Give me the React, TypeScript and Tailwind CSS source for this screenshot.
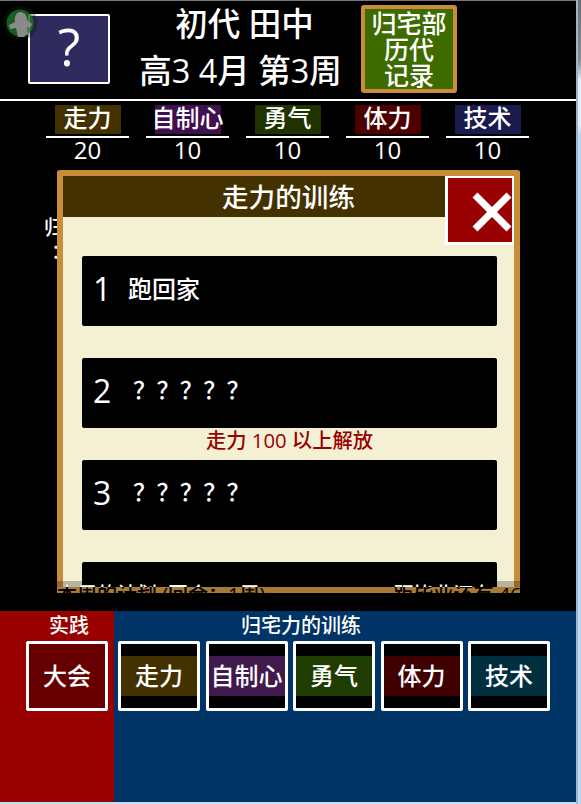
const font = "font-['Open_Sans','Noto_Sans_CJK_SC',sans-serif] font-medium";

const stats = [
  { label: "走力", value: 20, bg: "bg-[#433200]" },
  { label: "自制心", value: 10, bg: "bg-[#3f0f4f]" },
  { label: "勇气", value: 10, bg: "bg-[#1f3300]" },
  { label: "体力", value: 10, bg: "bg-[#4d0000]" },
  { label: "技术", value: 10, bg: "bg-[#191a4d]" },
];

const trainings = [
  { label: "走力", bg: "bg-[#433200]" },
  { label: "自制心", bg: "bg-[#401a4d]" },
  { label: "勇气", bg: "bg-[#1f3d00]" },
  { label: "体力", bg: "bg-[#400000]" },
  { label: "技术", bg: "bg-[#00303f]" },
];

const courses = [
  { no: 1, name: "跑回家", note: "" },
  { no: 2, name: "？？？？？", note: "走力 100 以上解放" },
  { no: 3, name: "？？？？？", note: "" },
  { no: 4, name: "", note: "" },
];

function Header() {
  return (
    <header className="flex h-[98px] pl-[28px]">
      <div className="mt-[13px] flex h-[70px] w-[82px] items-center justify-center rounded-[2px] border-2 border-white bg-[#2f2b5f] pb-[7px] text-[52px] leading-none text-white">
        ?
      </div>
      <div className="flex w-[251px] flex-col items-center pt-[2px] text-[32.5px] leading-[42px] text-white">
        <div className="ml-[18px]">初代 田中</div>
        <div className="ml-[10px] mt-[5px] whitespace-nowrap">高3 4月 第3周</div>
      </div>
      <button className="mt-[4px] flex h-[88px] w-[96px] flex-col items-center justify-center rounded-[3px] border-4 border-[#c98c38] bg-[#3d6b00] text-[25px] leading-[26px] text-white">
        <span>归宅部</span>
        <span>历代</span>
        <span>记录</span>
      </button>
    </header>
  );
}

function StatRow() {
  return (
    <div className="flex gap-[17px] pl-[46px] pt-[4px]">
      {stats.map((s) => (
        <div key={s.label} className="flex w-[83px] flex-col items-center text-white">
          <div className={`flex h-[29px] w-[66px] items-center justify-center whitespace-nowrap pb-[4px] text-[24px] leading-none ${s.bg}`}>
            {s.label}
          </div>
          <div className="mt-[2px] h-[2px] w-full bg-white" />
          <div className="pb-[4px] text-[24px] leading-[24px]">{s.value}</div>
        </div>
      ))}
    </div>
  );
}

function TrainingModal() {
  return (
    <div className="absolute left-[57px] top-[170px] h-[423px] w-[463px] overflow-hidden rounded-[3px] border-x-[6px] border-t-[6px] border-[#c98c38] bg-[#f3f0d4]">
      <div className="flex h-[41px] items-center justify-center bg-[#433200] pt-[2px] text-[26.6px] text-white">走力的训练</div>
      <div className="pl-[19px] pr-[17px] pt-[39px]">
        {courses.map((c) => (
          <div key={c.no} className="h-[102px]">
            <div className="flex h-[70px] items-center rounded-[2px] bg-black pb-[4px] pl-[11px] text-white">
              {c.name && <span className="w-[35px] text-[32px] leading-none">{c.no}</span>}
              <span className={c.no === 1 ? "text-[24px]" : "ml-[5px] text-[23.4px]"}>{c.name}</span>
            </div>
            {c.note && <div className="text-center text-[20.3px] leading-[24px] text-[#990000]">{c.note}</div>}
          </div>
        ))}
      </div>
      <div className="absolute right-[-1px] top-[-1px] flex h-[70px] w-[70px] items-start justify-end overflow-hidden border-[3px] border-white bg-[#990000]">
        <svg viewBox="0 0 40 40" className="mt-[14px] h-[40px] w-[40px]" fill="none" stroke="white" strokeWidth="7">
          <path d="M3 3 37 37M37 3 3 37" />
        </svg>
      </div>
    </div>
  );
}

// the line of text under the dialog that shows through its bottom edge
function BehindText({ color }: { color: string }) {
  return (
    <div className={`flex whitespace-nowrap pt-[2px] text-[20px] leading-[24px] ${color}`}>
      <span>本周的计划 (回合：1周)</span>
      <span className="ml-[128px]">距毕业还有 46</span>
    </div>
  );
}

function ModalEdge() {
  return (
    <div className="absolute left-[57px] top-[581px] h-[12px] w-[463px] overflow-hidden">
      <div className="h-[6px] bg-black/25" />
      <div className="h-[6px] bg-[#a87a35]" />
      <div className="absolute inset-0">
        <BehindText color="text-black" />
      </div>
      <div className="absolute inset-x-0 top-0 h-[6px] overflow-hidden">
        <BehindText color="text-white" />
      </div>
    </div>
  );
}

function BottomPanel() {
  return (
    <div className="flex h-[191px] text-white">
      <section className="w-[114px] bg-[#990000] pl-[26px] pt-[1px]">
        <div className="ml-[-2px] pb-[2px] text-center text-[20px] leading-[27px]">实践</div>
        <button className="flex h-[70px] w-[82px] items-center justify-center rounded-[2px] border-[3px] border-white bg-[#660000] text-[24px]">
          大会
        </button>
      </section>
      <section className="flex-1 bg-[#003366] pl-[4px] pt-[1px]">
        <div className="pb-[2px] pr-[92px] text-center text-[20px] leading-[27px]">归宅力的训练</div>
        <div className="flex gap-[5.5px]">
          {trainings.map((t) => (
            <button key={t.label} className="flex h-[70px] w-[82px] items-center rounded-[2px] border-[3px] border-white bg-black">
              <span className={`flex h-[40px] w-full items-center justify-center whitespace-nowrap text-[24px] ${t.bg}`}>{t.label}</span>
            </button>
          ))}
        </div>
      </section>
    </div>
  );
}

export default function App() {
  return (
    <div className={`relative flex h-[804px] w-[581px] overflow-hidden bg-[#c4dcf4] ${font}`}>
      <div className="flex h-[802px] w-[576px] shrink-0 flex-col bg-black">
        <div className="h-[1px] bg-[#777777]" />
        <Header />
        <div className="h-[2px] bg-white" />
        <StatRow />
        <main className="flex-1 pl-[44px] pt-[50px] text-[20px] leading-[24px] text-white">
          <div>归</div>
          <div className="pl-[7px]">：</div>
        </main>
        <BottomPanel />
      </div>
      <div className="h-full flex-1 border-l-2 border-[#9fb4cc] bg-[linear-gradient(to_bottom,#6e6e6e_0,#8a8a8a_60px,#e8eef5_80px,#e8eef5_125px,#bcd8f4_135px)]" />
      <svg viewBox="0 0 36 36" className="absolute left-[2px] top-[5px] h-[36px] w-[36px]">
        <circle cx="18" cy="18" r="17.5" fill="#0c1a0c" fillOpacity="0.35" />
        <circle cx="18" cy="18" r="13.5" fill="#1c7a28" fillOpacity="0.75" />
        <path d="M18 7c5 0 7 4 7 8l5 4-2 4-3-1 1 7-4 3h-6l-2-9-6 1-1-4 6-3c-1-6 2-10 5-10z" fill="#8a8a8a" />
      </svg>
      <TrainingModal />
      <ModalEdge />
    </div>
  );
}
